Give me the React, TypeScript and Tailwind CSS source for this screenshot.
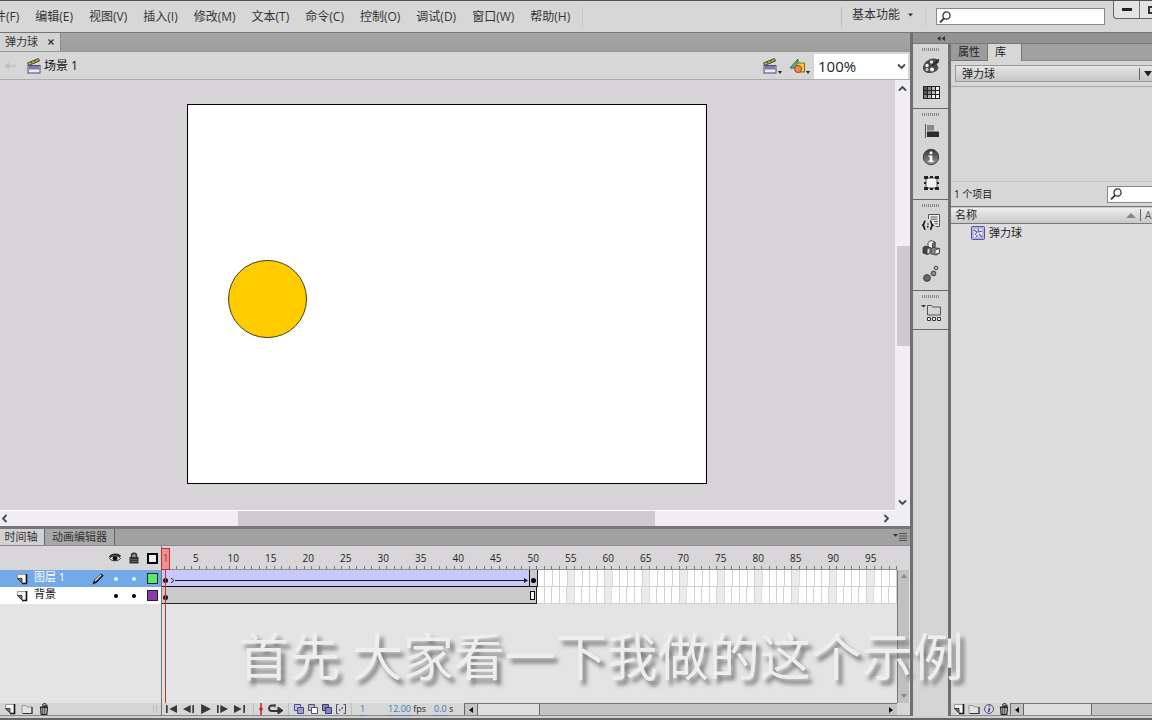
import React, { useState } from 'react';

const TOTAL_FRAMES = 98;
const SPAN_END = 50;

const menus = ['文件(F)', '编辑(E)', '视图(V)', '插入(I)', '修改(M)', '文本(T)', '命令(C)', '控制(O)', '调试(D)', '窗口(W)', '帮助(H)'];

const layers = [
  { id: 1, name: '图层 1', swatch: 'bg-[#5ce66c]', selected: true },
  { id: 2, name: '背景', swatch: 'bg-[#8b3aa8]', selected: false },
];

const Clapper = ({ className = 'w-4 h-4' }: { className?: string }) => (
  <svg className={className} viewBox="0 0 16 16">
    <path d="M1.500 5 12.500.500l1 2.500L2.500 7.500z" fill="#b3ad4c" stroke="#4c4a28" strokeWidth="1" />
    <path d="m5 3.600.9 2M8.500 2.200l.9 2" stroke="#4c4a28" />
    <rect x="2" y="7.500" width="12" height="7.500" fill="#e9e9f8" stroke="#4d4b78" />
    <path d="M2.500 8h11v3.500h-11z" fill="#7f7dac" />
  </svg>
);

const SearchIcon = () => (
  <svg className="w-3 h-3" viewBox="0 0 12 12" fill="none" stroke="#333">
    <circle cx="7.500" cy="4.500" r="3.600" strokeWidth="1.300" />
    <path d="M5 7.300 1 11.300" strokeWidth="1.800" />
  </svg>
);

const Chevron = ({ d }: { d: string }) => (
  <svg className="w-[9px] h-[9px]" viewBox="0 0 9 9" fill="none" stroke="#484848" strokeWidth="1.8">
    <path d={d} />
  </svg>
);

const UP = 'M1 6.5 4.5 3 8 6.5';
const DOWN = 'M1 2.5 4.5 6 8 2.5';
const LEFT = 'M6.5 1 3 4.5 6.5 8';
const RIGHT = 'M2.5 1 6 4.5 2.5 8';

const NewLayerIcon = () => (
  <svg className="w-3 h-3" viewBox="0 0 12 12">
    <path d="M1.5 1.5h9v9h-4L1.5 6z" fill="#f4f4f4" stroke="#999" />
    <path d="M10.5 1v9.5H6" fill="none" stroke="#111" strokeWidth="1.6" />
    <path d="M1.5 5.5h4.5v4.5z" fill="#777" stroke="#222" strokeWidth=".8" />
  </svg>
);

const FolderIcon = () => (
  <svg className="w-3 h-3" viewBox="0 0 12 12">
    <path d="M1 2.5h4l1 1.5h5v6.5H1z" fill="#e2e2e2" stroke="#999" />
    <path d="M11 4v6.5H2" fill="none" stroke="#333" strokeWidth="1.2" />
  </svg>
);

const TrashIcon = () => (
  <svg className="w-3 h-3" viewBox="0 0 12 12">
    <path d="m2.5 4.5.7 7h5.6l.7-7z" fill="#ccc" stroke="#222" strokeWidth="1.2" />
    <path d="M4.8 5v6M6.8 5v6" stroke="#333" />
    <path d="M1.5 4 9 1.6l1 2.2-7 1z" fill="#333" />
    <path d="M4.5 2.6 5 1l2.4-.5.6 1.2" fill="none" stroke="#222" />
  </svg>
);

const PaletteIcon = () => (
  <svg className="w-[18px] h-[18px]" viewBox="0 0 18 18">
    <path d="M1 11C1 6 6 2 11 1.5c3-.2 6 .8 6 3 0 1.8-2.2 1.7-2 3.3.2 1.4 1.8 1.5 1.3 3.5C15.5 14.5 11 16 7.5 16 4 16 1 14.5 1 11z" fill="#4a4a4a" />
    <circle cx="5" cy="8.5" r="1.7" fill="#eee" />
    <circle cx="9.5" cy="5" r="1.7" fill="#ddd" />
    <circle cx="5" cy="12.5" r="1.6" fill="#ccc" />
    <circle cx="10" cy="12.5" r="2" fill="#f4f4f4" />
    <path d="M10 9 17 2.5" stroke="#222" strokeWidth="1.5" />
  </svg>
);

const SwatchesIcon = () => (
  <svg className="w-[18px] h-[18px]" viewBox="0 0 18 18">
    <path d="M1 3h17v13H1z" fill="#222" />
    {[0, 1, 2, 3].map((c) =>
      [0, 1, 2].map((r) => (
        <rect key={c + '-' + r} x={2 + c * 4} y={4 + r * 4} width="3" height="3" fill={['#555', '#888', '#bbb', '#f2f2f2'][Math.min(3, c + (r === 2 ? 1 : 0))]} />
      ))
    )}
  </svg>
);

const AlignIcon = () => (
  <svg className="w-[18px] h-[18px]" viewBox="0 0 18 18">
    <path d="M3.5 2v14" stroke="#555" />
    <path d="M5 3h7v5.500H5z" fill="#888" />
    <path d="M5 9.500h12V15H5z" fill="#2c2c2c" />
  </svg>
);

const InfoIcon = () => (
  <svg className="w-[18px] h-[18px]" viewBox="0 0 18 18">
    <defs>
      <linearGradient id="info" x2="0" y2="1">
        <stop stopColor="#333" />
        <stop offset="1" stopColor="#999" />
      </linearGradient>
    </defs>
    <circle cx="9" cy="9" r="7.7" fill="url(#info)" stroke="#444" />
    <circle cx="9" cy="4.8" r="1.5" fill="#fff" />
    <path d="M6.5 7.5h3.8v5h1.2V14h-5v-1.5h1.300V9H6.5z" fill="#fff" />
  </svg>
);

const TransformIcon = () => (
  <svg className="w-[18px] h-[18px]" viewBox="0 0 18 18">
    <rect x="4" y="4" width="11" height="10" fill="#f6f6f6" stroke="#555" />
    <path d="M2 2h4v3H2zM8 2h3v2H8zM13 2h4v3h-4zM2 13h4v3H2zM8 14h3v2H8zM13 13h4v3h-4zM2 8h2v2H2zM15 8h2v2h-2z" fill="#222" />
  </svg>
);

const SnippetsIcon = () => (
  <svg className="w-[18px] h-[18px]" viewBox="0 0 18 18" fill="none">
    <path d="M6.500 6V1.500h11v12h-4" fill="#eee" stroke="#555" />
    <path d="M8.500 4h7M8.500 6.200h7M12 8.500h4M12.500 10.800h3.500" stroke="#555" />
    <path d="M3.500 8C1.500 8 3 11 .8 12.300c2.200 1 .7 4.200 2.700 4.200M8 8c2 0 .5 3 2.700 4.300-2.200 1-.7 4.200-2.700 4.200" stroke="#111" strokeWidth="1.600" />
    <path d="M6 10.500v1M5.500 14.500 6 13" stroke="#111" strokeWidth="1.500" />
  </svg>
);

const ComponentsIcon = () => (
  <svg className="w-[18px] h-[18px]" viewBox="0 0 18 18" stroke="#333" strokeWidth=".8">
    <path d="m6 3.500 3-2L13 3v5l-2.500 1.500L6 8z" fill="#eee" />
    <path d="M10.500 4.500 13 3v5l-2.500 1.500z" fill="#777" />
    <path d="m1 8.500 2.500-1.500L8 8.500V14l-2.500 1.500L1 14z" fill="#444" />
    <path d="M5 10v5.500L8 14V8.500z" fill="#ddd" />
    <path d="m9 10 2-1.500 6.500 1v4.500l-3 2L9 15z" fill="#888" />
    <path d="M13 11v4.500l4.500-1.500V9.500z" fill="#eee" />
  </svg>
);

const MotionIcon = () => (
  <svg className="w-[18px] h-[18px]" viewBox="0 0 18 18" stroke="#444">
    <circle cx="5" cy="13" r="3.4" fill="#666" />
    <circle cx="11.5" cy="8.5" r="2.4" fill="#888" />
    <circle cx="14" cy="3" r="1.8" fill="#bbb" />
  </svg>
);

const ProjectIcon = () => (
  <svg className="w-5 h-[18px]" viewBox="0 0 20 18">
    <path d="M0 1h5L2.5 3.5z" fill="#333" />
    <path d="M6.5 11V1.5h4l1 1.5h8v8z" fill="#d4d4d4" stroke="#555" />
    <path d="M6.5 13.5h3v3h-3zM11.500 13.5h3v3h-3zM16.500 13.5h3v3h-3z" fill="#eee" stroke="#333" />
  </svg>
);

const dock = [
  [{ label: '颜色', icon: <PaletteIcon /> }, { label: '样本', icon: <SwatchesIcon /> }],
  [{ label: '对齐', icon: <AlignIcon /> }, { label: '信息', icon: <InfoIcon /> }, { label: '变形', icon: <TransformIcon /> }],
  [{ label: '代码片断', icon: <SnippetsIcon /> }, { label: '组件', icon: <ComponentsIcon /> }, { label: '动画预设', icon: <MotionIcon /> }],
  [{ label: '项目', icon: <ProjectIcon /> }],
];

const playback = [
  { label: '第一帧', d: 'M0 1h1.500v8H0zM10 1v8L3 5z' },
  { label: '后退一帧', d: 'M7 1v8L0 5zM8.5 1H10v8H8.5z' },
  { label: '播放', d: 'M1 0v10l9-5z' },
  { label: '前进一帧', d: 'M0 1h1.5v8H0zM3 1v8l7-4z' },
  { label: '最后一帧', d: 'M0 1v8l7-4zM8.5 1H10v8H8.5z' },
];

const MenuBar = () => (
  <header className="flex h-[33px] shrink-0 items-center border-t border-b border-t-[#574f53] border-b-[#77757a] bg-[#d8d7d8] text-xs text-[#343434]">
    <nav className="-ml-[18px] flex gap-4">
      {menus.map((m) => (
        <button key={m} className="whitespace-nowrap">{m}</button>
      ))}
    </nav>
    <div className="ml-3 h-5 w-px bg-[#c5c4c6]" />
    <div className="ml-auto h-5 w-px bg-[#bbb]" />
    <button className="ml-[10px] flex items-center gap-2 pb-1">
      基本功能
      <svg className="h-1 w-[5px]" viewBox="0 0 5 4"><path d="M0 .5h5L2.5 3.5z" fill="#333" /></svg>
    </button>
    <div className="ml-3 h-5 w-px bg-[#cccbcc]" />
    <label className="ml-[10px] flex h-[17px] w-[169px] items-center border border-[#8a8a8a] bg-white px-0.5">
      <SearchIcon />
      <input aria-label="搜索帮助" className="min-w-0 flex-1 bg-transparent outline-none" />
    </label>
    <div className="ml-2 flex h-[18px] w-[39px] shrink-0 self-start overflow-hidden rounded-bl border-b border-l border-[#666] bg-[#e4e3e4]">
      <button aria-label="最小化" className="flex w-[26px] shrink-0 items-center justify-center border-r border-[#777]">
        <span className="h-[3px] w-[10px] bg-[#222]" />
      </button>
      <button aria-label="最大化" className="flex w-6 shrink-0 items-center pl-2">
        <span className="h-2 w-[10px] shrink-0 border-2 border-[#333]" />
      </button>
    </div>
  </header>
);

const EditBar = () => (
  <div className="flex h-7 shrink-0 items-center border-b border-[#aeb0ab] bg-[#d7d7d7] text-xs text-[#111]">
    <button aria-label="返回" className="ml-1">
      <svg className="h-3 w-3" viewBox="0 0 12 12"><path d="m0 6 5-4v2.5h2v3H5V10zM8 4.5h1.5v3H8zM10.5 4.5H12v3h-1.5z" fill="#c2c2c2" /></svg>
    </button>
    <button className="ml-[10px] flex items-center gap-0.5">
      <Clapper />
      <span>场景 1</span>
    </button>
    <div className="ml-auto flex items-center gap-2">
      <button aria-label="编辑场景" className="flex items-end">
        <Clapper className="h-[18px] w-[16px]" />
        <svg className="h-1 w-1" viewBox="0 0 4 4"><path d="M0 0h4L2 3z" fill="#222" /></svg>
      </button>
      <button aria-label="编辑元件" className="flex items-end">
        <svg className="h-[18px] w-[16px]" viewBox="0 0 16 18">
          <path d="m0 11 8-9v9z" fill="#58b08c" stroke="#2d6a5c" />
          <path d="M7 6h7.5v9H7z" fill="#e9cf3c" stroke="#7d6c20" />
          <circle cx="8" cy="12" r="3.5" fill="#f08a50" stroke="#ae3b20" />
        </svg>
        <svg className="h-1 w-1" viewBox="0 0 4 4"><path d="M0 0h4L2 3z" fill="#222" /></svg>
      </button>
    </div>
    <div className="relative mr-0.5 ml-1 h-[25px] w-[94px] self-end bg-white">
      <select aria-label="缩放" className="h-full w-full appearance-none bg-transparent pb-0.5 pl-1 text-[15px] text-[#222] outline-none">
        <option>100%</option>
      </select>
      <span className="pointer-events-none absolute top-2 right-[2px]"><Chevron d={DOWN} /></span>
    </div>
  </div>
);

const Stage = () => (
  <div className="grid min-h-0 flex-1 grid-cols-[1fr_15px] grid-rows-[1fr_16px] bg-[#f0eef1]">
    <div className="flex items-center justify-center overflow-hidden bg-[#d6d4d6] pr-px pb-0.5">
      <div className="relative h-[380px] w-[520px] border border-black bg-white">
        <div className="absolute top-[155px] left-[40px] h-[78px] w-[79px] rounded-full border border-[#4a3f12] bg-[#ffcc00]" />
      </div>
    </div>
    <div className="flex flex-col items-center">
      <button aria-label="向上滚动" className="flex h-4 items-center"><Chevron d={UP} /></button>
      <div className="flex w-full flex-1 flex-col">
        <div className="flex-[150]" />
        <div className="ml-0.5 flex-[100] bg-[#cdcbce]" />
        <div className="flex-[148]" />
      </div>
      <button aria-label="向下滚动" className="flex h-4 items-center"><Chevron d={DOWN} /></button>
    </div>
    <div className="flex items-center border-t border-white">
      <button aria-label="向左滚动" className="w-4"><Chevron d={LEFT} /></button>
      <div className="flex h-full min-w-0 flex-1">
        <div className="flex-[222]" />
        <div className="flex-[417] bg-[#cdcbce]" />
        <div className="flex-[224]" />
      </div>
      <button aria-label="向右滚动" className="flex w-4 justify-end pr-1"><Chevron d={RIGHT} /></button>
    </div>
    <div />
  </div>
);

const EmptyFrames = () => (
  <div className="flex min-w-0 flex-[48] border-b border-[#d2d2d2]">
    {Array.from({ length: TOTAL_FRAMES - SPAN_END }, (_, i) => (
      <div
        key={i}
        className={(SPAN_END + i + 1) % 5 === 0 ? 'min-w-0 flex-1 border-r border-[#dcdcdc] bg-[#ebebeb]' : 'min-w-0 flex-1 border-r border-[#d2d2d2] bg-white'}
      />
    ))}
  </div>
);

const Ruler = () => (
  <div className="flex h-6 border-b border-[#8f8f8f] bg-[#d8d6d8]">
    {Array.from({ length: TOTAL_FRAMES }, (_, i) => (
      <div key={i} className="flex min-w-0 flex-1 flex-col justify-between">
        <div className="flex h-5 items-center justify-center pt-1 text-[10px] text-[#222]">
          {(i === 0 || (i + 1) % 5 === 0) && <span className={i === 0 ? 'text-[#a02020]' : ''}>{i + 1}</span>}
        </div>
        <div className="h-[3px] border-r border-[#777]" />
      </div>
    ))}
  </div>
);

const Divider = () => <div className="h-full w-px shrink-0 bg-[#bdbdbd]" />;

const OnionIcons = () => (
  <div className="flex items-center gap-0.5">
    <button aria-label="绘图纸外观">
      <svg className="h-3 w-3" viewBox="0 0 12 12" stroke="#4d4a86"><path d="M1.5 1.5h6v6h-6z" fill="#c5c3e5" /><path d="M4.5 4.5h6v6h-6z" fill="#9f9cd0" /></svg>
    </button>
    <button aria-label="绘图纸外观轮廓">
      <svg className="h-3 w-3" viewBox="0 0 12 12" stroke="#555"><path d="M1.5 1.5h6v6h-6z" fill="#b7b5dc" /><path d="M4.5 4.5h6v6h-6z" fill="#fff" /></svg>
    </button>
    <button aria-label="编辑多个帧">
      <svg className="h-3 w-3" viewBox="0 0 12 12" stroke="#3d3a76"><path d="M1.5 1.5h6v6h-6z" fill="#8582bd" /><path d="M4.5 4.5h6v6h-6z" fill="#8582bd" /></svg>
    </button>
    <button aria-label="修改标记">
      <svg className="h-3 w-3" viewBox="0 0 12 12" fill="none" stroke="#4a4870"><path d="M3.5 1.5h-2v9h2M8.5 1.5h2v9h-2" /><path d="M4 7h1.500M6.500 5H8" strokeWidth="1.5" /></svg>
    </button>
  </div>
);

const HScroll = ({ className, thumb, rest, end }: { className: string; thumb: string; rest: string; end: boolean }) => (
  <div className={'flex h-full min-w-0 flex-1 border-t border-[#777] bg-[#c4c4c4] ' + className}>
    <button aria-label="向左" className="flex w-[14px] shrink-0 items-center justify-center border-r border-l border-[#666]">
      <svg className="h-[6px] w-1" viewBox="0 0 4 6"><path d="M4 0v6L0 3z" fill="#111" /></svg>
    </button>
    <div className={'border-r border-[#666] bg-[#dedede] ' + thumb} />
    <div className={rest} />
    {end && (
      <button aria-label="向右" className="flex w-3 shrink-0 items-center justify-center">
        <svg className="h-[6px] w-1" viewBox="0 0 4 6"><path d="M0 0v6l4-3z" fill="#111" /></svg>
      </button>
    )}
  </div>
);

const Timeline = () => (
  <section className="flex h-[190px] shrink-0 flex-col border-t-[3px] border-[#78777a] bg-[#e4e4e4]">
    <div className="flex h-[17px] shrink-0 items-stretch border-b border-[#8c8c8c] bg-[#a1a1a2] text-[11px] text-[#333]">
      <button className="flex w-11 items-center justify-center bg-[#d3d2d3] pr-0.5 whitespace-nowrap">时间轴</button>
      <button className="flex w-[71px] items-center justify-center border-r border-l border-[#666] bg-[#a8a8a9] whitespace-nowrap">动画编辑器</button>
      <button aria-label="面板菜单" className="mr-[3px] ml-auto">
        <svg className="h-2 w-[14px]" viewBox="0 0 14 8"><path d="M0 1h5L2.5 3.8z" fill="#333" /><path d="M6 .5h8M6 3h8M6 5.3h8M6 7.5h8" stroke="#555" /></svg>
      </button>
    </div>
    <div className="relative flex min-h-0 flex-1">
      <div className="flex w-[162px] shrink-0 flex-col border-r border-[#777]">
        <div className="flex h-6 items-center gap-2 bg-[#d8d6d8] pl-[109px]">
          <svg className="h-3 w-3 shrink-0" viewBox="0 0 12 12"><path d="M.5 6.500C3 3 9 3 11.5 6.500 9 9.500 3 9.500.5 6.500z" fill="#eee" stroke="#222" /><circle cx="6" cy="6.300" r="2.400" fill="#111" /><path d="M.500 5C3 1.500 9 1.500 11.500 4.500" stroke="#222" strokeWidth="1.800" fill="none" /></svg>
          <svg className="h-3 w-[10px] shrink-0" viewBox="0 0 10 12"><path d="M2.500 6V3.800a2.500 2.500 0 0 1 5 0V6" fill="#999" stroke="#333" strokeWidth="1.500" /><path d="M.500 5h9v6.500h-9z" fill="#333" /><path d="M1.500 7.500h7M1.500 9.500h7" stroke="#777" strokeWidth=".6" /></svg>
          <div className="h-[11px] w-[11px] shrink-0 border-2 border-black bg-[#eee]" />
        </div>
        {layers.map((l) => (
          <div key={l.id} className={l.selected ? 'flex h-[17px] items-center bg-[#74a9e8] pl-4 text-[11px] text-white' : 'flex h-[17px] items-center bg-white pl-4 text-[11px] text-[#111]'}>
            <NewLayerIcon />
            <span className="ml-[6px] flex-1 pb-0.5">{l.name}</span>
            {l.selected && (
              <svg className="mr-[10px] h-3 w-3" viewBox="0 0 12 12"><path d="m.500 11.500 1.300-4L9 .500 11.700 2.500 4.500 10z" fill="#1c1c1c" /><path d="m3 8 6-6" stroke="#eee" strokeWidth="1.300" /></svg>
            )}
            <span className={l.selected ? 'h-1 w-1 rounded-full bg-[#dff4ff]' : 'h-1 w-1 rounded-full bg-black'} />
            <span className={l.selected ? 'ml-[14px] h-1 w-1 rounded-full bg-[#dff4ff]' : 'ml-[14px] h-1 w-1 rounded-full bg-black'} />
            <span className={'mr-[3px] ml-[11px] h-[11px] w-[11px] border border-[#222] ' + l.swatch} />
          </div>
        ))}
        <div className="mt-auto flex h-[13px] items-center gap-[5px] border-b border-[#888] bg-[#d5d5d5] pl-1">
          <button aria-label="新建图层"><NewLayerIcon /></button>
          <button aria-label="新建文件夹"><FolderIcon /></button>
          <button aria-label="删除"><TrashIcon /></button>
          <span className="mr-1 ml-auto h-2 w-1 border-r border-l border-[#bbb]" />
        </div>
      </div>
      <div className="flex min-w-0 flex-1 flex-col">
        <div className="bg-[#d8d6d8] pr-[13px]"><Ruler /></div>
        <div className="flex min-h-0 flex-1">
          <div className="min-w-0 flex-1">
            <div className="flex h-[17px]">
              <div className="flex min-w-0 flex-[49] items-center border-r border-b border-[#111] bg-[#c9c8fb] pt-1">
                <span className="ml-px h-[5px] w-[5px] shrink-0 rounded-full bg-[#2a0712]" />
                <svg className="ml-[3px] h-[5px] w-1 shrink-0" viewBox="0 0 4 5" fill="none" stroke="#223"><path d="m0 0 3 2.5L0 5" /></svg>
                <span className="h-px flex-1 bg-[#16162c]" />
                <svg className="mr-px h-[5px] w-1 shrink-0" viewBox="0 0 4 5" fill="#16162c"><path d="m0 0 4 2.5L0 5z" /></svg>
              </div>
              <div className="flex min-w-0 flex-1 items-center justify-center border-r border-b border-[#222] bg-[#cbcacb] pt-1">
                <span className="h-[5px] w-[5px] shrink-0 rounded-full bg-black" />
              </div>
              <EmptyFrames />
            </div>
            <div className="flex h-[17px]">
              <div className="flex min-w-0 flex-[50] items-center justify-between border-r border-b border-[#222] bg-[#cbcacb] pt-1">
                <span className="ml-px h-[5px] w-[5px] rounded-full bg-[#2a0712]" />
                <span className="mr-px mb-1 h-[9px] w-[5px] border border-black bg-white" />
              </div>
              <EmptyFrames />
            </div>
          </div>
          <div className="mr-px flex w-3 flex-col items-center justify-between border-l border-[#777] bg-[#c0c0c0] py-1">
            <svg className="h-[5px] w-[6px]" viewBox="0 0 6 5"><path d="M0 4h6L3 0z" fill="#888" /></svg>
            <svg className="h-[5px] w-[6px]" viewBox="0 0 6 5"><path d="M0 0h6L3 4z" fill="#888" /></svg>
          </div>
        </div>
        <div className="flex h-[13px] shrink-0 items-center border-b border-[#888] bg-[#d7d7d7] text-[9px] text-[#222]">
          <div className="flex gap-[6px] px-1">
            {playback.map((p) => (
              <button key={p.label} aria-label={p.label}>
                <svg className="h-[10px] w-[11px]" viewBox="0 0 10 10" preserveAspectRatio="none"><path d={p.d} fill="#383838" /></svg>
              </button>
            ))}
          </div>
          <div className="ml-1 flex h-full items-center gap-1">
            <Divider />
            <button aria-label="帧居中"><svg className="h-3 w-[6px]" viewBox="0 0 6 12"><path d="M3 0v12" stroke="#d02020" strokeWidth="1.5" /><circle cx="3" cy="6" r="1.8" fill="#d02020" /></svg></button>
            <button aria-label="循环"><svg className="h-[10px] w-4" viewBox="0 0 16 10"><path d="M7 1.5H4C0 1.5 0 7 4 7h7" fill="none" stroke="#333" strokeWidth="1.8" /><path d="M10 3v7l5-3.5zM7 0v3.5" fill="#333" stroke="#333" /></svg></button>
            <Divider />
            <OnionIcons />
            <Divider />
          </div>
          <span className="ml-2 w-7 text-[#3f78ad]"><span className="border-b border-dotted">1</span></span>
          <span className="w-[46px] whitespace-nowrap"><span className="border-b border-dotted text-[#3f78ad]">12.00</span> fps</span>
          <span className="w-[30px] whitespace-nowrap"><span className="border-b border-dotted text-[#3f78ad]">0.0</span> s</span>
          <HScroll className="mr-[13px]" thumb="flex-[61]" rest="flex-[345]" end />
        </div>
      </div>
      <div className="pointer-events-none absolute top-0.5 bottom-[13px] left-[161px] flex flex-col items-center">
        <div className="h-[22px] w-[9px] border border-[#d02828] bg-[#ff3030]/40" />
        <div className="w-px flex-1 bg-[#dd2a2a]" />
      </div>
    </div>
  </section>
);

const Dock = () => (
  <aside className="w-[35px] shrink-0 bg-[#d5d5d5]">
    {dock.map((group, i) => (
      <div key={i} className="flex flex-col items-center border-b border-[#666] pt-1 pb-[3px]">
        <svg className="mb-0.5 h-[3px] w-[18px]" viewBox="0 0 18 3"><path d="M0 1.5h18" stroke="#888" strokeWidth="3" strokeDasharray="1 1" /></svg>
        {group.map((item) => (
          <button key={item.label} aria-label={item.label} className="flex h-[26px] items-center">{item.icon}</button>
        ))}
      </div>
    ))}
  </aside>
);

const Library = () => {
  const [query, setQuery] = useState('');

  return (
    <aside className="flex w-[204px] shrink-0 flex-col overflow-hidden border-l-[3px] border-[#6f6f71] bg-[#d7d7d7] text-[11px] text-[#222]">
      <div className="flex h-[17px] shrink-0 bg-[#a1a1a2]">
        <button className="w-[37px] border-r border-b border-[#777] bg-[#9c9c9d]">属性</button>
        <button className="w-[34px] border-r border-[#777] bg-[#d7d7d7] pr-2">库</button>
        <div className="flex-1 border-b border-[#888]" />
      </div>
      <div className="shrink-0 border-b border-[#aaa] py-1 pl-1">
        <div className="relative h-[17px] border border-r-0 border-[#999] bg-linear-to-b from-[#e6e6e6] to-[#c6c6c6]">
          <select aria-label="文档" className="block h-full w-full appearance-none bg-transparent pb-0.5 pl-[6px] outline-none">
            <option>弹力球</option>
          </select>
          <span className="pointer-events-none absolute top-[2px] right-0 flex items-center gap-1">
            <span className="h-3 w-px bg-[#666]" />
            <svg className="h-[6px] w-2" viewBox="0 0 8 6"><path d="M0 0h8L4 5.5z" fill="#222" /></svg>
          </span>
        </div>
      </div>
      <div className="h-[95px] shrink-0 border-b border-[#c4c4c4]" />
      <div className="flex h-6 shrink-0 items-center justify-between pl-[3px]">
        <span className="text-[10px]">1 个项目</span>
        <label className="flex h-[17px] w-[45px] items-center border border-r-0 border-[#888] bg-white pl-0.5">
          <SearchIcon />
          <input aria-label="搜索库" value={query} onChange={(e) => setQuery(e.target.value)} className="min-w-0 flex-1 outline-none" />
        </label>
      </div>
      <div className="min-h-0 flex-1 bg-[#dddddd]">
        <table className="w-full table-fixed border-collapse">
          <thead>
            <tr className="h-[17px] border-t border-b border-[#777] bg-linear-to-b from-[#efefef] to-[#c8c8c8]">
              <th className="p-0 pl-1 text-left font-normal">
                <span className="flex items-center justify-between pr-1 leading-4">
                  名称
                  <svg className="h-[5px] w-[10px]" viewBox="0 0 10 5"><path d="M0 5h10L5 0z" fill="#888" /></svg>
                </span>
              </th>
              <th className="w-3 overflow-hidden p-0 text-left font-normal">
                <span className="block overflow-hidden border-l border-[#666] pl-1 text-[10px] leading-3 text-[#555]">AS</span>
              </th>
            </tr>
          </thead>
          <tbody>
            <tr>
              <td colSpan={2} className="p-0 pl-5">
                <span className="flex h-[18px] items-center gap-1">
                  <svg className="h-[14px] w-[14px]" viewBox="0 0 14 14"><rect x=".5" y=".5" width="13" height="13" rx="1" fill="#b5b3e4" stroke="#55539a" /><path d="M3 3h8v8H3z" fill="#eeeefc" /><path d="m3 4 3 2-2 3M7 3l1 3 3-1M8 8l3 3M6 9v2" stroke="#5653a0" strokeWidth="1.2" fill="none" /></svg>
                  弹力球
                </span>
              </td>
            </tr>
          </tbody>
        </table>
      </div>
      <div className="flex h-[13px] shrink-0 items-center border-b border-[#888] bg-[#d5d5d5]">
        <div className="flex gap-[3px] pl-0.5">
          <button aria-label="新建元件"><NewLayerIcon /></button>
          <button aria-label="新建文件夹"><FolderIcon /></button>
          <button aria-label="属性">
            <svg className="h-3 w-3" viewBox="0 0 12 12"><circle cx="6" cy="6" r="4.5" fill="#d4d3ee" stroke="#55536f" /><path d="M6.5 2.5v1.3M6.5 5 5.7 9" stroke="#44427a" strokeWidth="1.5" /></svg>
          </button>
          <button aria-label="删除"><TrashIcon /></button>
        </div>
        <HScroll className="" thumb="w-[68px]" rest="flex-1" end={false} />
      </div>
    </aside>
  );
};

const App: React.FC = () => {
  return (
    <div className="relative flex h-screen flex-col overflow-hidden bg-[#d5d5d5] font-['Open_Sans','Noto_Sans_CJK_SC',sans-serif]">
      <MenuBar />
      <div className="flex min-h-0 flex-1">
        <main className="flex min-w-0 flex-1 flex-col">
          <div className="flex h-[19px] shrink-0 border-b border-[#999] bg-linear-to-b from-[#a6a6a7] to-[#9d9d9e] text-[11px] text-[#333]">
            <div className="flex w-[61px] items-center justify-between border-r border-[#888] bg-[#d3d3d3] pr-[6px] pl-[5px]">
              <span className="whitespace-nowrap">弹力球</span>
              <button aria-label="关闭">
                <svg className="h-[6px] w-[6px]" viewBox="0 0 6 6"><path d="m.5.5 5 5M5.5.5l-5 5" stroke="#333" strokeWidth="1.3" /></svg>
              </button>
            </div>
          </div>
          <EditBar />
          <Stage />
          <Timeline />
        </main>
        <div className="flex shrink-0 flex-col border-l-[3px] border-[#6f6f71]">
          <div className="flex h-[11px] shrink-0 items-center border-b border-[#777] bg-[#929293] pl-6">
            <svg className="h-[5px] w-2" viewBox="0 0 8 5"><path d="M3.5 0v5L0 2.5zM8 0v5L4.500 2.5z" fill="#333" /></svg>
          </div>
          <div className="flex min-h-0 flex-1">
            <Dock />
            <Library />
          </div>
        </div>
      </div>
      <div className="h-1 shrink-0 border-b-2 border-[#666] bg-[#cfcfcf]" />
      <p className="pointer-events-none absolute inset-x-0 bottom-[30px] pl-[50px] text-center font-['Noto_Sans_CJK_SC',sans-serif] text-[51px] leading-[72px] whitespace-nowrap text-[#eeeeee] text-shadow-[4px_5px_4px_#777]">
        首先 大家看一下我做的这个示例
      </p>
    </div>
  );
};

export default App;
